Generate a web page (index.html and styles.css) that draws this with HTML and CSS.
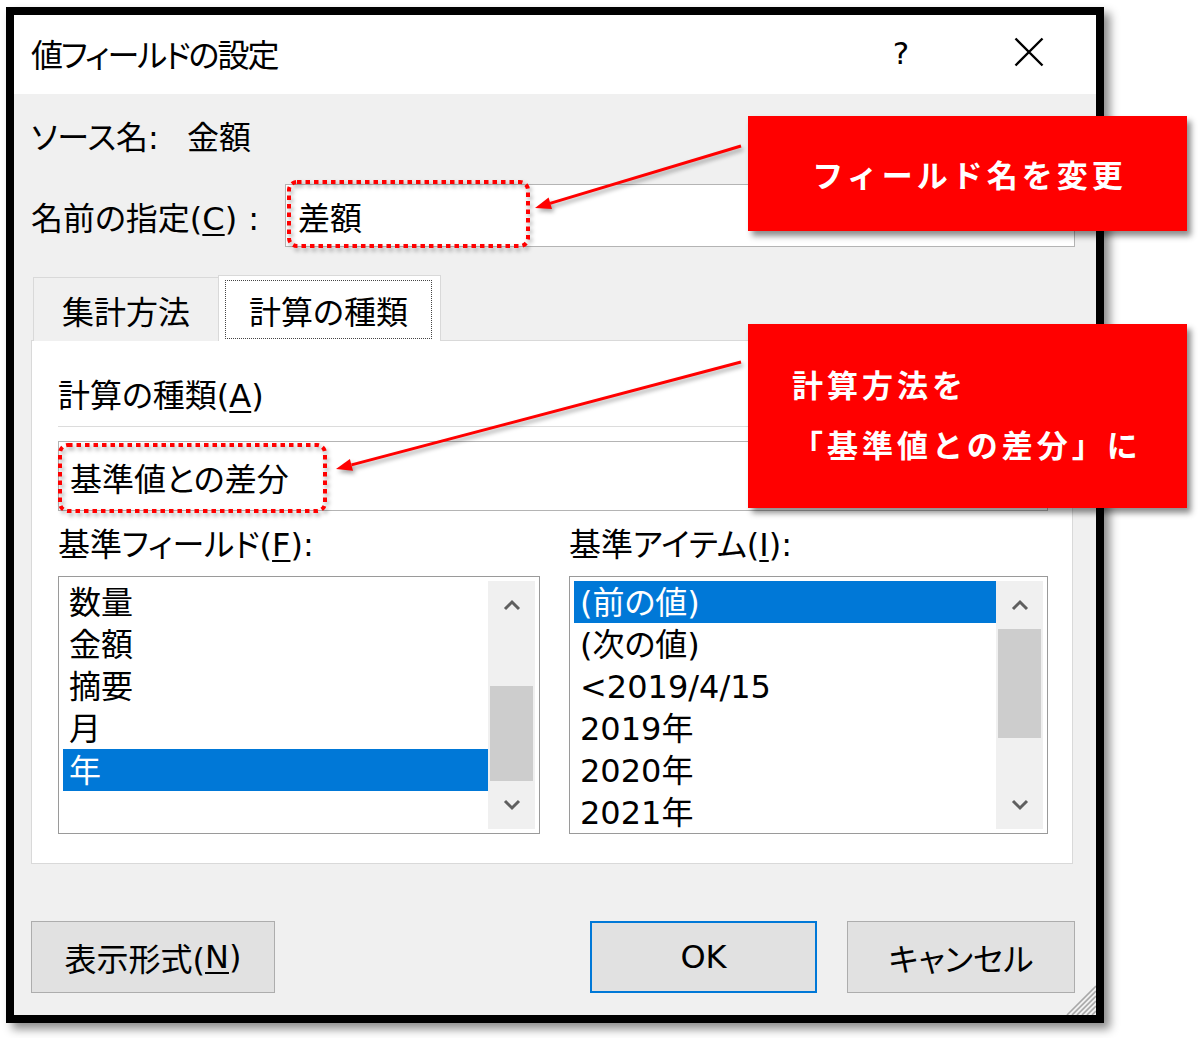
FILE: index.html
```html
<!DOCTYPE html>
<html lang="ja">
<head>
<meta charset="utf-8">
<title>値フィールドの設定</title>
<link rel="stylesheet" href="styles.css">
</head>
<body>
<div class="dialog">
  <div class="titlebar">
    <div class="title">値フィールドの設定</div>
    <div class="help">?</div>
    <div class="close">
      <svg width="30" height="30" viewBox="0 0 30 30"><path d="M1.5 1.5 L28.5 28.5 M28.5 1.5 L1.5 28.5" stroke="#000" stroke-width="2.4" fill="none"/></svg>
    </div>
  </div>
  <div class="content">
    <div class="source"><span class="src-key">ソース名:</span><span class="src-val">金額</span></div>
    <div class="name-row">
      <div class="name-label"><span>名前の指定(<u>C</u>)</span><span class="colon">:</span></div>
      <div class="textbox">差額</div>
    </div>
    <div class="tabs">
      <div class="tab">集計方法</div>
      <div class="tab active"><div class="focus">計算の種類</div></div>
    </div>
    <div class="panel">
      <div class="label">計算の種類(<u>A</u>)</div>
      <div class="rule"></div>
      <div class="combo">基準値との差分</div>
      <div class="lists">
        <div class="label">基準フィールド(<u>F</u>):</div>
        <div class="label">基準アイテム(<u>I</u>):</div>
        <div class="listbox">
          <ul class="items">
            <li>数量</li>
            <li>金額</li>
            <li>摘要</li>
            <li>月</li>
            <li class="sel">年</li>
          </ul>
          <div class="sb">
            <div class="sb-btn"><svg width="18" height="12" viewBox="0 0 18 12"><path d="M2 10 L9 3 L16 10" stroke="#5f5f5f" stroke-width="3" fill="none"/></svg></div>
            <div class="track"><div class="thumb t1"></div></div>
            <div class="sb-btn"><svg width="18" height="12" viewBox="0 0 18 12"><path d="M2 2 L9 9 L16 2" stroke="#5f5f5f" stroke-width="3" fill="none"/></svg></div>
          </div>
        </div>
        <div class="listbox">
          <ul class="items">
            <li class="sel">(前の値)</li>
            <li>(次の値)</li>
            <li>&lt;2019/4/15</li>
            <li>2019年</li>
            <li>2020年</li>
            <li>2021年</li>
          </ul>
          <div class="sb">
            <div class="sb-btn"><svg width="18" height="12" viewBox="0 0 18 12"><path d="M2 10 L9 3 L16 10" stroke="#5f5f5f" stroke-width="3" fill="none"/></svg></div>
            <div class="track"><div class="thumb t2"></div></div>
            <div class="sb-btn"><svg width="18" height="12" viewBox="0 0 18 12"><path d="M2 2 L9 9 L16 2" stroke="#5f5f5f" stroke-width="3" fill="none"/></svg></div>
          </div>
        </div>
      </div>
    </div>
    <div class="buttons">
      <div class="btn format">表示形式(<u>N</u>)</div>
      <div class="btn ok">OK</div>
      <div class="btn cancel">キャンセル</div>
    </div>
  </div>
  <svg class="grip" width="30" height="30" viewBox="0 0 30 30">
    <path d="M30 1 L1 30 M30 6 L6 30 M30 11 L11 30 M30 16 L16 30 M30 21 L21 30 M30 26 L26 30" stroke="#a8a8a8" stroke-width="1.6" fill="none"/>
  </svg>
</div>

<svg class="overlay" width="1200" height="1038" viewBox="0 0 1200 1038">
  <g class="marks">
    <rect x="289" y="182" width="239" height="64" rx="8" fill="none" stroke="#ff0000" stroke-width="4" stroke-dasharray="4.5 4"/>
    <rect x="60" y="445" width="265" height="66" rx="8" fill="none" stroke="#ff0000" stroke-width="4" stroke-dasharray="4.5 4"/>
    <line x1="741" y1="146" x2="550" y2="203.4" stroke="#ff0000" stroke-width="3"/>
    <polygon points="535,208 548.6,197.6 552,209.1" fill="#ff0000"/>
    <line x1="741" y1="362" x2="351.5" y2="464.9" stroke="#ff0000" stroke-width="3"/>
    <polygon points="336,469 349.9,459.1 353,470.7" fill="#ff0000"/>
  </g>
</svg>

<div class="callout c1">フィールド名を変更</div>
<div class="callout c2">
  <div>計算方法を</div>
  <div>「基準値との差分」に</div>
</div>
</body>
</html>
```

FILE: styles.css
```css
* { box-sizing: border-box; }

html, body {
  margin: 0;
  background: #fff;
}

body {
  position: relative;
  width: 1200px;
  height: 1038px;
  overflow: hidden;
  padding: 7px 0 0 6px;
  font-family: "DejaVu Sans", "Noto Sans CJK JP", sans-serif;
  font-size: 32px;
  color: #000;
  font-feature-settings: "palt";
}

u {
  text-decoration-thickness: 2px;
  text-underline-offset: 4px;
}

.dialog {
  position: relative;
  width: 1098px;
  height: 1016px;
  border: 8px solid #000;
  background: #f0f0f0;
  box-shadow: 6px 6px 9px rgba(0, 0, 0, 0.45);
  display: flex;
  flex-direction: column;
}

.titlebar {
  height: 79px;
  flex: none;
  background: #fff;
  display: flex;
  align-items: center;
  padding: 0 37px 0 17px;
}

.title {
  flex: 1;
  white-space: nowrap;
  letter-spacing: -2px;
  margin-top: -4px;
}

.help {
  width: 40px;
  text-align: center;
  font-size: 31px;
  margin-top: -4px;
}

.close {
  margin-left: 78px;
  width: 60px;
  height: 30px;
  margin-top: -6px;
  display: flex;
  justify-content: center;
}

.content {
  flex: 1;
  padding: 24px 21px 0 17px;
}

.source {
  height: 40px;
  line-height: 40px;
  display: flex;
  white-space: nowrap;
}

.src-key { width: 156px; flex: none; }

.name-row {
  margin-top: 26px;
  height: 63px;
  display: flex;
  align-items: center;
}

.name-label {
  width: 254px;
  flex: none;
  display: flex;
  align-items: baseline;
  padding-right: 26px;
  white-space: nowrap;
}

.name-label .colon { margin-left: auto; }

.textbox {
  flex: 1;
  height: 63px;
  background: #fff;
  border: 1px solid #b4b4b4;
  padding-left: 12px;
  display: flex;
  align-items: center;
}

.tabs {
  position: relative;
  z-index: 1;
  margin-top: 28px;
  height: 66px;
  display: flex;
  align-items: flex-end;
  padding-left: 2px;
}

.tab {
  width: 185px;
  height: 64px;
  border: 1px solid #d9d9d9;
  border-bottom: none;
  border-right: none;
  background: #f0f0f0;
  display: flex;
  align-items: center;
  justify-content: center;
}

.tab.active {
  width: 223px;
  height: 66px;
  background: #fff;
  border-right: 1px solid #d9d9d9;
  padding: 4px 8px 2px 6px;
  align-items: stretch;
}

.focus {
  flex: 1;
  border: 1px dotted #444;
  display: flex;
  align-items: center;
  justify-content: center;
}

.panel {
  margin-top: -1px;
  margin-right: 2px;
  height: 524px;
  background: #fff;
  border: 1px solid #d9d9d9;
  padding: 35px 24px 0 26px;
}

.label {
  height: 40px;
  line-height: 40px;
  white-space: nowrap;
}

.rule {
  margin-top: 10px;
  height: 1px;
  background: #dcdcdc;
}

.combo {
  margin-top: 14px;
  height: 70px;
  border: 1px solid #b4b4b4;
  background: #fff;
  padding: 2px 0 0 11px;
  display: flex;
  align-items: center;
}

.lists {
  margin-top: 14px;
  display: grid;
  grid-template-columns: 482px 479px;
  column-gap: 29px;
  row-gap: 11px;
}

.listbox {
  height: 258px;
  border: 1px solid #9a9a9a;
  background: #fff;
  padding: 4px 4px 0 4px;
  display: flex;
}

.items {
  list-style: none;
  margin: 0;
  padding: 0;
  flex: 1;
}

.items li {
  height: 42px;
  line-height: 44px;
  padding-left: 6px;
  white-space: nowrap;
}

.items li.sel {
  background: #0078d7;
  color: #fff;
}

.sb {
  width: 47px;
  flex: none;
  margin-bottom: 4px;
  background: #f0f0f0;
  display: flex;
  flex-direction: column;
}

.sb-btn {
  height: 48px;
  display: flex;
  align-items: center;
  justify-content: center;
}

.track {
  flex: 1;
  padding: 0 2px;
}

.thumb { background: #cdcdcd; }
.thumb.t1 { margin-top: 57px; height: 95px; }
.thumb.t2 { height: 109px; }

.buttons {
  margin-top: 57px;
  height: 72px;
  display: flex;
}

.btn {
  height: 72px;
  background: #e1e1e1;
  border: 1px solid #adadad;
  display: flex;
  align-items: center;
  justify-content: center;
  white-space: nowrap;
}

.btn.format { width: 244px; }
.btn.ok { margin-left: auto; width: 227px; border: 2px solid #0078d7; }
.btn.cancel { margin-left: 30px; width: 228px; }

.grip {
  position: absolute;
  right: 0;
  bottom: 0;
}

.overlay {
  position: absolute;
  left: 0;
  top: 0;
  pointer-events: none;
}

.marks {
  filter: drop-shadow(2px 3px 2px rgba(0, 0, 0, 0.35));
}

.callout {
  position: absolute;
  background: #ff0000;
  color: #fff;
  font-family: "Noto Sans CJK JP", sans-serif;
  font-weight: 700;
  font-size: 31px;
  letter-spacing: 4px;
  font-feature-settings: normal;
  box-shadow: 4px 5px 6px rgba(0, 0, 0, 0.45);
  white-space: nowrap;
}

.c1 {
  left: 748px;
  top: 116px;
  width: 439px;
  height: 115px;
  padding-left: 4px;
  display: flex;
  align-items: center;
  justify-content: center;
}

.c2 {
  left: 748px;
  top: 324px;
  width: 439px;
  height: 184px;
  padding: 30px 0 0 44px;
  line-height: 60px;
}
```
